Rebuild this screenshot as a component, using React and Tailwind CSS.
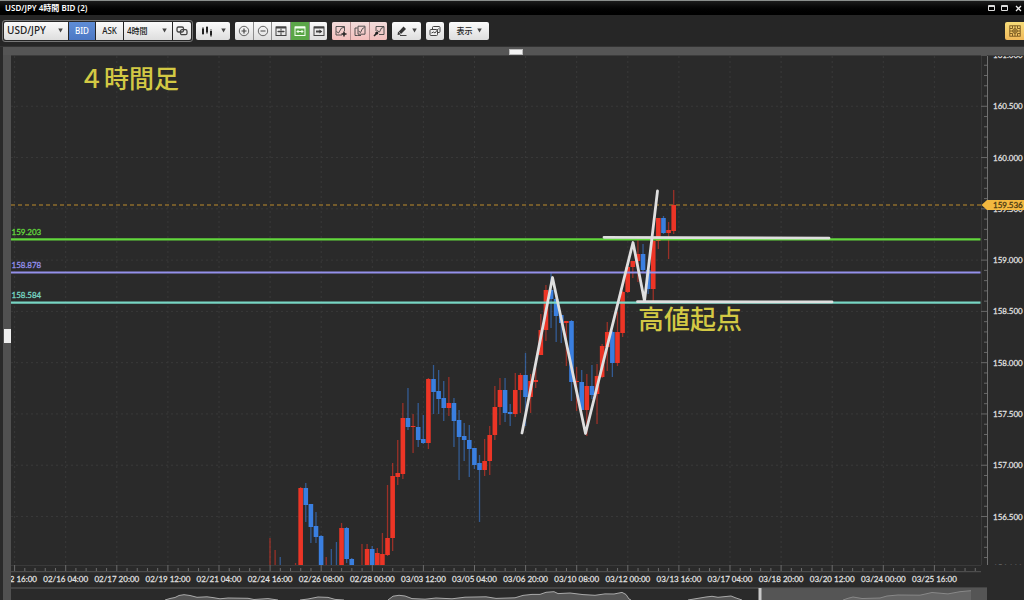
import React from "react";

const RED = "#ec3526";
const BLUE = "#3a7fe0";

// [slot, direction, open/close top, open/close bottom, high, low]; a null body draws the wick only
const candles = [
  [0, "u", null, null, 538, 565], [1, "u", null, null, 550, 565], [2, "d", null, null, 557, 565],
  [5, "u", null, null, 563, 565], [6, "u", 488, 565, 487, 565], [7, "d", 488, 505, 483, 522],
  [8, "d", 504, 527, 504, 543], [9, "d", 526, 537, 512, 543], [10, "d", 536, 565, 535, 565],
  [11, "u", null, null, 557, 565], [12, "d", null, null, 549, 565], [13, "d", null, null, 542, 565],
  [14, "u", 528, 565, 523, 565], [15, "d", 528, 559, 527, 563], [16, "d", 559, 565, 558, 565],
  [18, "u", null, null, 544, 565], [19, "u", 549, 565, 544, 565], [20, "d", 549, 565, 546, 565],
  [21, "u", 553, 565, 548, 565], [22, "u", 554, 565, 533, 565], [23, "u", 538, 555, 485, 556],
  [24, "u", 476, 538, 463, 551], [25, "u", 473, 477, 440, 485], [26, "u", 418, 474, 403, 479],
  [27, "d", 418, 427, 388, 430], [28, "u", 426, 427, 414, 453], [29, "d", 427, 440, 403, 447],
  [30, "d", 439, 443, 415, 444], [31, "u", 379, 443, 378, 449], [32, "d", 379, 392, 365, 414],
  [33, "d", 391, 399, 370, 414], [34, "d", 398, 408, 381, 421], [35, "u", 403, 408, 377, 416],
  [36, "d", 403, 421, 398, 447], [37, "d", 420, 437, 410, 480], [38, "d", 436, 440, 423, 461],
  [39, "d", 440, 449, 425, 477], [40, "d", 448, 465, 448, 469], [41, "d", 463, 470, 455, 522],
  [42, "u", 461, 470, 439, 476], [43, "u", 435, 461, 426, 475], [44, "u", 407, 435, 386, 440],
  [45, "u", 390, 407, 378, 425], [46, "d", 390, 413, 378, 422], [47, "d", 412, 414, 404, 426],
  [48, "u", 390, 414, 373, 417], [49, "u", 375, 390, 373, 413], [50, "d", 375, 397, 353, 426],
  [51, "u", 381, 397, 374, 413], [52, "u", 380, 382, 368, 388], [53, "u", 330, 355, 314, 355],
  [54, "u", 290, 330, 285, 341], [55, "d", 290, 299, 272, 328], [56, "d", 299, 316, 298, 342],
  [57, "d", 315, 323, 315, 343], [58, "u", 321, 323, 321, 366], [59, "d", 321, 382, 320, 401],
  [60, "u", 381, 382, 367, 411], [61, "d", 382, 410, 370, 410], [62, "u", 386, 410, 374, 436],
  [63, "d", 386, 395, 365, 399], [64, "u", 376, 394, 364, 424], [65, "u", 346, 377, 344, 378],
  [66, "u", 332, 347, 322, 371], [67, "d", 332, 363, 331, 377], [68, "u", 332, 363, 312, 366],
  [69, "u", 292, 333, 291, 337], [70, "u", 267, 292, 266, 293], [71, "u", 261, 267, 261, 278],
  [72, "u", 254, 261, 236, 282], [73, "d", 254, 270, 244, 272], [74, "d", 270, 289, 268, 294],
  [75, "u", 241, 289, 240, 301], [76, "u", 218, 241, 218, 249], [77, "d", 218, 233, 216, 234],
  [78, "u", 230, 233, 222, 259], [79, "u", 205, 231, 190, 234],
];

const dates = [
  "02/12 16:00", "02/16 04:00", "02/17 20:00", "02/19 12:00", "02/21 04:00", "02/24 16:00", "02/26 08:00",
  "02/28 00:00", "03/03 12:00", "03/05 04:00", "03/06 20:00", "03/10 08:00", "03/12 00:00", "03/13 16:00",
  "03/17 04:00", "03/18 20:00", "03/20 12:00", "03/24 00:00", "03/25 16:00",
];

const prices = [
  "161.000", "160.500", "160.000", "159.500", "159.000", "158.500",
  "158.000", "157.500", "157.000", "156.500", "156.000",
];

const levels = [
  { price: "159.203", y: 239.4, color: "#62d83c" },
  { price: "158.878", y: 272.5, color: "#9490ea" },
  { price: "158.584", y: 302.6, color: "#77d5c3" },
];

const dateX = (i) => 14.6 + i * 51.1;
const priceY = (i) => 55 + i * 51.28;
const slotX = (i) => 270 + i * 5.11;

const overview =
  "M165 600 L170 598.5 175 597.5 179 595.5 184 594.7 190 595.5 197 597.3 207 596.8 213 597.6 220 598.8 228 598 248 598.3 254 599.5 268 598.6 278 600 M300 600 L308 599 318 597 328 597.4 335 599.4 344 600 M388 600 L393 596.2 399 595.3 405 596 412 598.6 425 599.2 436 598 452 598.8 465 597.2 486 596.8 496 598.4 515 597.8 523 595.4 532 594.4 540 594.4 546 592.3 554 591.7 558 593.6 570 593 583 594.6 595 595.3 605 593.9 614 594 622 592.4 626 594.5 629 599 631 600 M688 600 L700 598 706 597 712 596.3 718 597.3 731 596 736 598 742 600";

function Chart() {
  return (
    <svg
      viewBox="11 55 1013 545"
      className="block w-full"
      role="img"
      aria-label="USD/JPY 4時間"
      fontFamily='Lato, "Noto Sans", sans-serif'
    >
      <defs>
        <clipPath id="priceAxis"><rect x="980" y="56" width="44" height="509" /></clipPath>
        <clipPath id="timeAxis"><rect x="11" y="572" width="970" height="15" /></clipPath>
      </defs>
      <rect x="11" y="55" width="1013" height="545" fill="#2a2a2a" />
      <rect x="11" y="55" width="1013" height="1" fill="#3c3c3c" />

      <g stroke="#393939" strokeWidth="1" strokeDasharray="2 3">
        {dates.map((d, i) => <path key={d} d={`M${dateX(i)} 56V565`} />)}
        {prices.slice(1, 10).map((p, i) => <path key={p} d={`M11 ${priceY(i + 1)}H981`} />)}
      </g>
      <path d="M11 205H982" stroke="#8d6c2d" strokeWidth="1.4" strokeDasharray="4 3" />

      {candles.map(([slot, dir, top, bottom, high, low]) => {
        const color = dir === "u" ? RED : BLUE;
        return (
          <g key={slot}>
            <path d={`M${slotX(slot)} ${high}V${low}`} stroke={color} strokeWidth="1.3" strokeOpacity="0.58" />
            {top !== null && (
              <rect x={slotX(slot) - 2.3} y={top} width="4.6" height={Math.max(bottom - top, 1)} fill={color} />
            )}
          </g>
        );
      })}

      {levels.map((l) => (
        <g key={l.price}>
          <path d={`M11 ${l.y}H980.5`} stroke={l.color} strokeWidth="2.2" />
          <text x="11.5" y={l.y - 4.4} fontSize="8" fill={l.color} stroke={l.color} strokeWidth="0.3">{l.price}</text>
        </g>
      ))}

      <g fill="none" stroke="#dfdfdf" strokeWidth="2.8" strokeLinecap="round" strokeLinejoin="round">
        <path d="M522 433L552.5 277.500L585.5 433.500L633 242.500L644.500 301L657.500 191" />
        <path d="M604 237.300L829 238.200" />
        <path d="M637.500 301.700L832 301.900" />
      </g>

      <g fill="none" stroke="#555555">
        <path d="M981.5 56V565" stroke="#3a3a3a" />
        <path d="M11 565.5H981" stroke="#3a3a3a" />
        <path d="M987.5 56V565" stroke="#707070" />
        <path d="M11 571.7H981" />
        {Array.from({ length: 50 }, (_, i) => (
          <path key={i} d={`M${i % 5 === 0 ? 981 : 984} ${priceY(i / 5)}H987`} stroke="#686868" />
        ))}
        {Array.from({ length: 95 }, (_, i) => (
          <path key={i} d={`M${14.6 + i * 10.22} ${i % 5 === 0 ? 565 : 568}V571`} stroke="#6c6c6c" />
        ))}
      </g>

      <g clipPath="url(#priceAxis)" fontSize="8" fill="#dedede" stroke="#dedede" strokeWidth="0.3">
        {prices.map((p, i) => <text key={p} x="993" y={priceY(i) + 3}>{p}</text>)}
      </g>
      <path d="M981.5 205L987 200H1024V210H987Z" fill="#f3b83f" />
      <text x="993" y="208" fontSize="8" fill="#4c3b14" stroke="#4c3b14" strokeWidth="0.3">159.536</text>

      <g clipPath="url(#timeAxis)" fontSize="8" textAnchor="middle" fill="#dedede" stroke="#dedede" strokeWidth="0.3">
        {dates.map((d, i) => <text key={d} x={dateX(i)} y="582">{d}</text>)}
      </g>

      <rect x="11" y="587" width="976" height="2" fill="#444444" />
      <path d={overview} fill="#555555" stroke="#aaaaaa" strokeWidth="1" />
      <rect x="760" y="588" width="227" height="12" fill="#555555" />
      <path
        d="M843 600L848 598.300 853 597 862 598.500 880 598 887 596 898 595 920 595.200 932 592.500 948 593.900 960 591.700 971 590.700V600Z"
        fill="#656565"
      />
      <path
        d="M843 600L848 598.300 853 597 862 598.500 880 598 887 596 898 595 920 595.200 932 592.500 948 593.900 960 591.700 971 590.700"
        fill="none"
        stroke="#888888"
      />
      <rect x="758.5" y="588" width="3" height="12" fill="#c9c9c9" />

      <g fill="#d3c944" fontFamily='"Noto Sans CJK JP", sans-serif' fontWeight="500">
        <text x="79" y="88" fontSize="25">４時間足</text>
        <text x="638" y="329" fontSize="26">高値起点</text>
      </g>
    </svg>
  );
}

function Icon({ children }) {
  return (
    <svg viewBox="0 0 12 12" className="size-3 shrink-0" fill="none" stroke="#444444" strokeWidth="1" aria-hidden="true">
      {children}
    </svg>
  );
}

const face = "flex h-[18px] items-center justify-center bg-linear-to-b from-[#fbfbfb] to-[#dedede] text-[#222222]";
const pinkFace = "flex h-[18px] items-center justify-center bg-linear-to-b from-[#f2dcdb] to-[#f3bfbd] text-[#222222]";

function Arrow() {
  return (
    <svg viewBox="0 0 6 5" className="h-[5px] w-[5px] shrink-0" aria-hidden="true">
      <path d="M0.300 0H5.700L3 5Z" fill="#444444" />
    </svg>
  );
}

function Select({ label, value, className }) {
  return (
    <label className={`relative ${className}`}>
      <select
        aria-label={label}
        defaultValue={value}
        className="h-full w-full appearance-none bg-transparent pl-[3px] outline-none"
      >
        <option>{value}</option>
      </select>
      <span className="pointer-events-none absolute inset-y-0 right-[5px] flex items-center"><Arrow /></span>
    </label>
  );
}

function Toolbar() {
  return (
    <div className="flex h-[32px] items-center border-b border-[#333333] bg-[#262626] pl-[2px]">
      <div className="flex gap-px rounded-[3px] border border-[#777777] p-px">
        <Select label="通貨ペア" value="USD/JPY" className={`${face} w-[64px] rounded-l-[2px] text-[10px] font-medium`} />
        <button className="flex h-[18px] w-[26px] items-center justify-center bg-linear-to-b from-[#5f8dd6] to-[#4c78c4] text-[8px] font-medium text-white">BID</button>
        <button className={`${face} w-[27px] text-[8px] font-medium`}>ASK</button>
        <Select label="時間足" value="4時間" className={`${face} w-[48px] text-[8px] font-medium`} />
        <button aria-label="連動" className={`${face} w-[18px] rounded-r-[2px]`}>
          <Icon><g strokeWidth="1.3"><rect x="1" y="2" width="6.500" height="5" rx="1.500" /><rect x="4.500" y="4.700" width="6.500" height="5" rx="1.500" /></g></Icon>
        </button>
      </div>

      <button aria-label="チャート種類" className={`${face} ml-[3px] w-[34px] gap-2 rounded-[2px]`}>
        <Icon>
          <g fill="#222222" stroke="#222222">
            <path d="M2 2V10M6 1V9M10 4V12" strokeWidth="0.700" />
            <path d="M2 3.500V9M6 2V7.500M10 6V10.500" strokeWidth="2" />
          </g>
        </Icon>
        <Arrow />
      </button>

      <div className="ml-[5px] flex gap-px overflow-hidden rounded-[2px] bg-[#8e8e8e]">
        <button aria-label="拡大" className={`${face} w-[18px]`}>
          <Icon><circle cx="6" cy="6" r="4.700" strokeWidth="0.800" /><path d="M3.500 6H8.500M6 3.500V8.500" strokeWidth="1.200" /></Icon>
        </button>
        <button aria-label="縮小" className={`${face} w-[17px]`}>
          <Icon><circle cx="6" cy="6" r="4.700" strokeWidth="0.800" /><path d="M3.500 6H8.500" strokeWidth="1.200" /></Icon>
        </button>
        <button aria-label="自動調整" className={`${face} w-[18px]`}>
          <Icon><rect x="1" y="2" width="10" height="8.500" /><path d="M1 2.500H11" strokeWidth="2" /><path d="M2.500 6.500H9.500M6 3.500V10M4 5.500V7.500M8 5.500V7.500" /></Icon>
        </button>
        <button aria-label="横幅調整" className="flex h-[18px] w-[18px] items-center justify-center bg-[#5aa648]">
          <Icon><g stroke="#f3fff0"><rect x="1" y="2" width="10" height="8.500" /><path d="M1 2.500H11" strokeWidth="2" /><path d="M3 6.500H9M4.500 5L3 6.500L4.500 8M7.500 5L9 6.500L7.500 8" /></g></Icon>
        </button>
        <button aria-label="最新へ" className={`${face} w-[17px]`}>
          <Icon><rect x="1" y="2" width="10" height="8.500" /><path d="M1 2.500H11" strokeWidth="2" /><path d="M3 6.500H7" strokeWidth="1.800" /><path d="M6.500 4.500L9.300 6.500L6.500 8.500Z" fill="#333333" stroke="none" /></Icon>
        </button>
      </div>

      <div className="ml-[5px] flex gap-px overflow-hidden rounded-[2px] bg-[#b59090]">
        <button aria-label="指標追加" className={`${pinkFace} w-[18px]`}>
          <Icon><path d="M7 10H1V1.500H9.500V6M1.500 6.500L3.500 8L6.500 3L9 2.500" strokeWidth="0.900" /><path d="M9 6.500V11.500M6.500 9H11.500" strokeWidth="1.500" stroke="#222222" /></Icon>
        </button>
        <button aria-label="指標編集" className={`${pinkFace} w-[18px]`}>
          <Icon><path d="M3.500 10.500H1V3H3.500M7 10.500H3.500M4 1.200H11V9.200H4ZM4.500 6L6.500 7.500L8.500 3.500L10.500 2.500" strokeWidth="0.900" /></Icon>
        </button>
        <button aria-label="指標設定" className={`${pinkFace} w-[17px]`}>
          <Icon><path d="M3 6V1.500H11V9.500H6M4 5.500L6.500 7L8.500 3L10.500 2.500" strokeWidth="0.900" /><path d="M1 11L4 8" strokeWidth="1.600" stroke="#222222" /><circle cx="3.800" cy="8" r="1.600" fill="#222222" stroke="none" /></Icon>
        </button>
      </div>

      <button aria-label="描画" className={`${face} ml-[5px] w-[29px] gap-1 rounded-[2px]`}>
        <Icon><path d="M2 7.500L7.500 1.500L10 4L4.500 9.500L1.500 10Z" fill="#333333" stroke="none" /><path d="M4 10.500H10.500" /><path d="M3 7.300L5 9.200" stroke="#eeeeee" strokeWidth="0.700" /></Icon>
        <Arrow />
      </button>
      <button aria-label="チャート複製" className={`${face} ml-[5px] w-[18px] rounded-[2px]`}>
        <Icon><rect x="3.500" y="1.500" width="7.500" height="6" rx="1" /><rect x="1" y="4.500" width="7.500" height="6" rx="1" fill="#eeeeee" /><path d="M2.500 8L4.500 7L6 8L9.500 3.500" /></Icon>
      </button>
      <button className={`${face} ml-[5px] w-[40px] gap-1 rounded-[2px] text-[8px] font-medium`}>表示<Arrow /></button>
      <button aria-label="レイアウト" className="ml-auto flex h-[18px] w-[19px] items-center justify-center rounded-l-[2px] bg-linear-to-b from-[#f6dc79] to-[#f0b95a]">
        <Icon><g stroke="#72521c" strokeWidth="0.900"><rect x="0.800" y="0.800" width="10.400" height="10.400" /><path d="M6 0.800V11.200M0.800 6H11.200M1 3.500H3.500V1M11 3.500H8.500V1M1 8.500H3.500V11M11 8.500H8.500V11" /><circle cx="6" cy="6" r="2.300" /></g></Icon>
      </button>
    </div>
  );
}

export default function App() {
  return (
    <div className="min-h-screen bg-[#2a2a2a] font-['Noto_Sans','Noto_Sans_CJK_JP',sans-serif]">
      <header className="flex h-[15px] items-center justify-between border-t border-[#8b8f8d] bg-linear-to-b from-[#1c1c1c] to-black pr-[2px] pl-[5px] text-white">
        <h1 className="text-[8px] leading-none font-semibold">USD/JPY 4時間 BID (2)</h1>
        <div className="flex items-center gap-[6px]">
          <button aria-label="最小化" className="h-[6px] w-[7px] rounded-[1px] border border-t-2 border-[#dddddd]" />
          <button aria-label="最大化" className="h-[6px] w-[7px] rounded-[1px] border border-t-2 border-[#dddddd]" />
          <button aria-label="閉じる" className="ml-px">
            <svg viewBox="0 0 7 7" className="size-[7px]" aria-hidden="true"><path d="M1 1L6 6M6 1L1 6" stroke="#eeeeee" strokeWidth="1.300" /></svg>
          </button>
        </div>
      </header>
      <Toolbar />
      <div className="ml-[3px] flex h-[8px] items-end justify-center bg-[#555555] pl-[5px]">
        <div className="h-[6px] w-[14px] border border-[#bbbbbb] bg-[#f3f3f3]" />
      </div>
      <main className="flex">
        <div className="ml-[3px] flex w-[8px] shrink-0 items-center justify-end bg-[#515151] pt-4">
          <div className="h-[14px] w-[7px] bg-[#eeeeee]" />
        </div>
        <div className="min-w-0 flex-1"><Chart /></div>
      </main>
    </div>
  );
}
